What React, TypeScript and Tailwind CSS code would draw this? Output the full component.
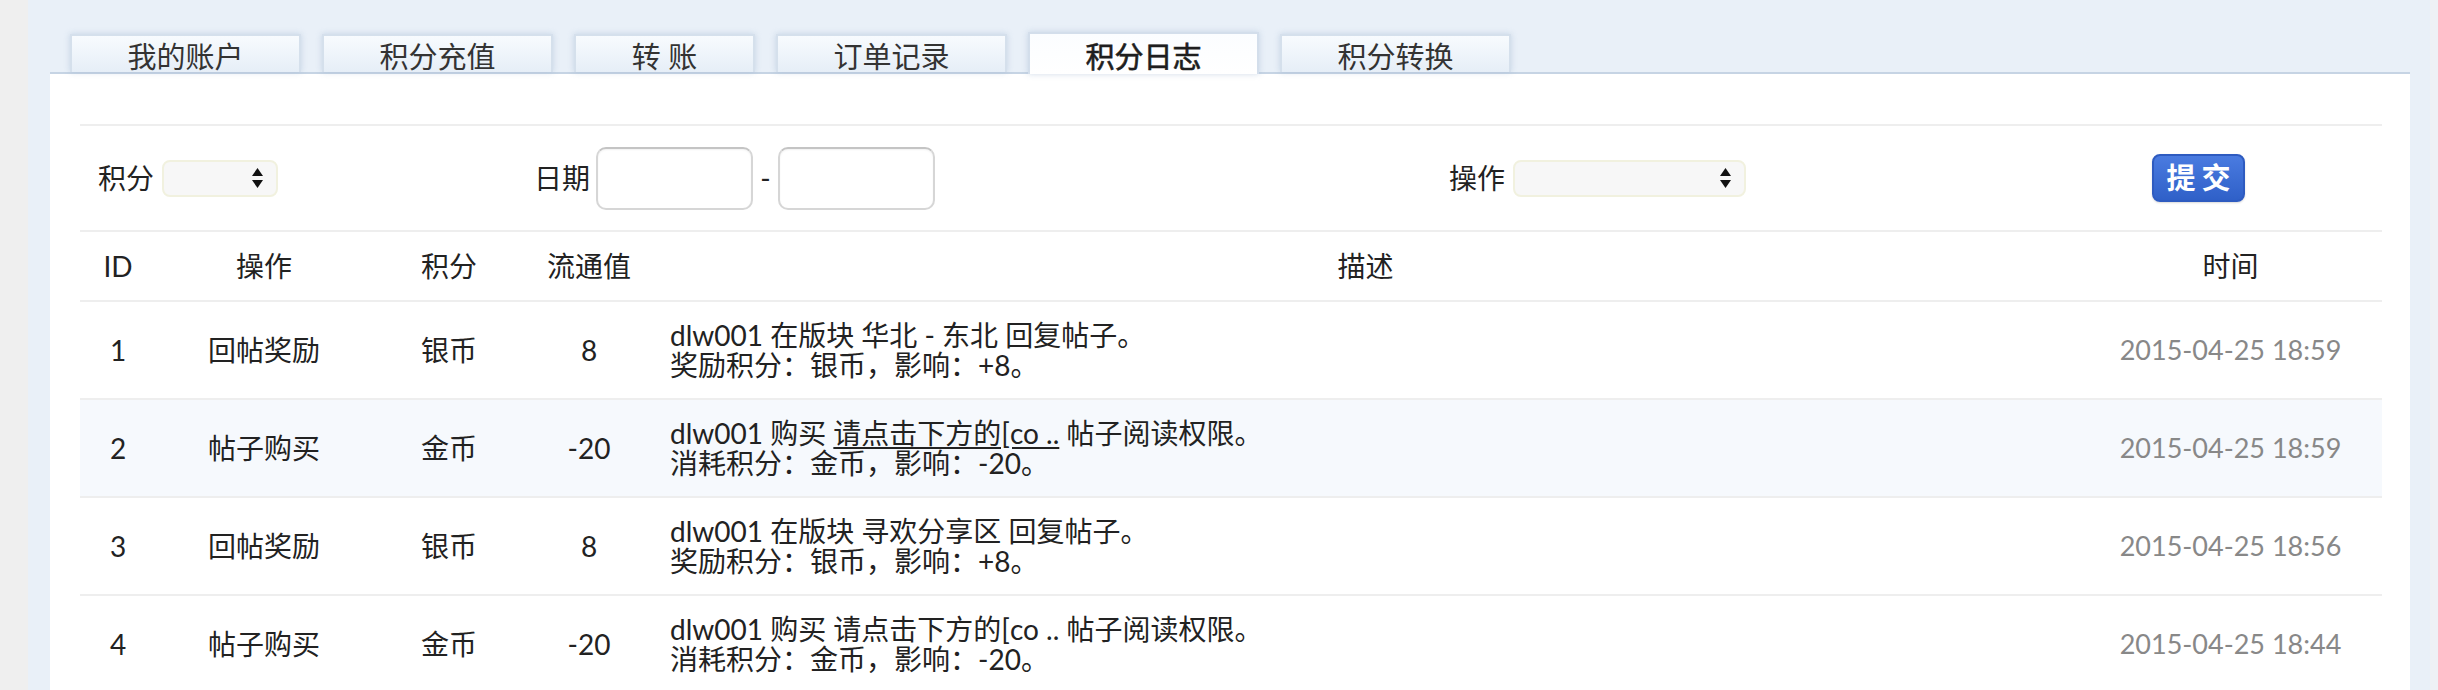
import React from 'react';

// Credit log page: tab strip, filter bar and the log table

interface LogRow {
  id: number;
  action: string;
  credit: string;
  amount: string;
  line1: React.ReactNode;
  line2: string;
  time: string;
}

const tabs = [
  { label: '我的账户', width: 'w-[231px]' },
  { label: '积分充值', width: 'w-[231px]' },
  { label: '转 账', width: 'w-[181px]' },
  { label: '订单记录', width: 'w-[231px]' },
  { label: '积分日志', width: 'w-[231px]', active: true },
  { label: '积分转换', width: 'w-[231px]' },
];

const rows: LogRow[] = [
  {
    id: 1,
    action: '回帖奖励',
    credit: '银币',
    amount: '8',
    line1: 'dlw001 在版块 华北 - 东北 回复帖子。',
    line2: '奖励积分：银币，影响：+8。',
    time: '2015-04-25 18:59',
  },
  {
    id: 2,
    action: '帖子购买',
    credit: '金币',
    amount: '-20',
    line1: (
      <>
        dlw001 购买 <span className="underline underline-offset-[3px]">请点击下方的[co ..</span> 帖子阅读权限。
      </>
    ),
    line2: '消耗积分：金币，影响：-20。',
    time: '2015-04-25 18:59',
  },
  {
    id: 3,
    action: '回帖奖励',
    credit: '银币',
    amount: '8',
    line1: 'dlw001 在版块 寻欢分享区 回复帖子。',
    line2: '奖励积分：银币，影响：+8。',
    time: '2015-04-25 18:56',
  },
  {
    id: 4,
    action: '帖子购买',
    credit: '金币',
    amount: '-20',
    line1: 'dlw001 购买 请点击下方的[co .. 帖子阅读权限。',
    line2: '消耗积分：金币，影响：-20。',
    time: '2015-04-25 18:44',
  },
];

// the hovered row gets the pale blue tint
const hoverId = 2;

const cols = 'grid grid-cols-[76px_216px_154px_126px_1fr_303px]';

const SelectArrows = () => (
  <svg width="11" height="20" viewBox="0 0 11 20" className="shrink-0">
    <path d="M5.5 0 L11 8 L0 8 Z" fill="#111" />
    <path d="M0 12 L11 12 L5.5 20 Z" fill="#111" />
  </svg>
);

const FakeSelect = ({ width }: { width: string }) => (
  <div
    className={`${width} h-[37px] rounded-[8px] border-2 border-[#f1f1df] bg-[#f7f7f7] flex items-center justify-end pr-[13px]`}
  >
    <SelectArrows />
  </div>
);

const DateInput = () => (
  <div className="w-[157px] h-[63px] rounded-[10px] border-2 border-[#d6d6d6] border-t-[#c4c4c4] bg-white shadow-[inset_0_1px_2px_rgba(0,0,0,0.06)]" />
);

export default function App() {
  return (
    <div className="flex min-h-[690px] font-[Lato,'Noto_Sans_CJK_SC',sans-serif] text-[#222]">
      <div className="w-[28px] shrink-0 bg-[#efefef]" />

      <div className="flex-1 bg-[#e9f0f8] pl-[22px] pr-[20px] pt-[32px]">
        {/* tab strip */}
        <div className="flex items-end gap-[21px] pl-[20px] h-[40px]">
          {tabs.map((tab) =>
            tab.active ? (
              <div
                key={tab.label}
                className={`${tab.width} relative z-10 -mb-[2px] h-[42px] border-2 border-b-0 border-[#d3deeb] bg-gradient-to-b from-[#fbfdff] to-white pt-[8px] text-center text-[29px] leading-[29px] text-[#1e1e1e] [-webkit-text-stroke:0.6px_#1e1e1e] shadow-[0_0_6px_rgba(150,175,205,0.45)]`}
              >
                {tab.label}
              </div>
            ) : (
              <div
                key={tab.label}
                className={`${tab.width} h-[38px] border-2 border-b-0 border-[#d5e0ec] bg-gradient-to-b from-[#f8fbfe] to-[#e6eef7] pt-[6px] text-center text-[29px] leading-[29px] text-[#333] shadow-[0_0_6px_rgba(150,175,205,0.45)]`}
              >
                {tab.label}
              </div>
            )
          )}
        </div>

        {/* panel */}
        <div className="bg-white border-t-2 border-[#c6d4e4] pl-[30px] pr-[28px] pt-[50px] min-h-[620px]">
          {/* filter bar */}
          <div className="flex items-center h-[108px] border-y-2 border-[#eeeeee] pl-[18px] text-[28px]">
            <div className="flex items-center gap-[8px]">
              <span>积分</span>
              <FakeSelect width="w-[116px]" />
            </div>
            <div className="flex items-center ml-[256px]">
              <span className="mr-[6px]">日期</span>
              <DateInput />
              <span className="w-[25px] text-center">-</span>
              <DateInput />
            </div>
            <div className="flex items-center gap-[8px] ml-[514px]">
              <span>操作</span>
              <FakeSelect width="w-[233px]" />
            </div>
            <button
              type="button"
              className="ml-[406px] w-[93px] h-[48px] rounded-[8px] border-2 border-[#2e5bc0] bg-gradient-to-b from-[#4a7be0] to-[#2f60c8] text-white text-[29px] font-bold tracking-[6px] pl-[6px] shadow-[0_1px_2px_rgba(0,0,0,0.15)]"
            >
              提交
            </button>
          </div>

          {/* table header */}
          <div className={`${cols} h-[70px] items-center border-b-2 border-[#eeeeee] text-[28px] text-center`}>
            <div>ID</div>
            <div>操作</div>
            <div>积分</div>
            <div>流通值</div>
            <div>描述</div>
            <div>时间</div>
          </div>

          {/* table body */}
          {rows.map((row) => (
            <div
              key={row.id}
              className={`${cols} h-[98px] items-center border-b-2 border-[#eeeeee] text-[28px] text-center ${
                row.id === hoverId ? 'bg-[#f6f9fd]' : 'bg-white'
              }`}
            >
              <div>{row.id}</div>
              <div>{row.action}</div>
              <div>{row.credit}</div>
              <div>{row.amount}</div>
              <div className="text-left pl-[18px] leading-[30px]">
                <div>{row.line1}</div>
                <div>{row.line2}</div>
              </div>
              <div className="text-[27px] text-[#888]">{row.time}</div>
            </div>
          ))}
        </div>
      </div>

      <div className="w-[8px] shrink-0 bg-[#eef1f5]" />
    </div>
  );
}
